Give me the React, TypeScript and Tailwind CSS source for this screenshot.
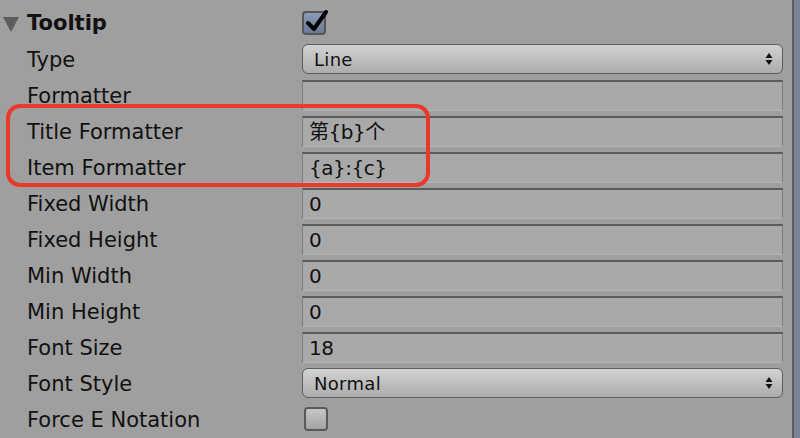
import React from 'react';

type Row =
  | { label: string; kind: 'text'; value: string }
  | { label: string; kind: 'popup'; value: string }
  | { label: string; kind: 'check'; checked: boolean };

const rows: Row[] = [
  { label: 'Type', kind: 'popup', value: 'Line' },
  { label: 'Formatter', kind: 'text', value: '' },
  { label: 'Title Formatter', kind: 'text', value: '第{b}个' },
  { label: 'Item Formatter', kind: 'text', value: '{a}:{c}' },
  { label: 'Fixed Width', kind: 'text', value: '0' },
  { label: 'Fixed Height', kind: 'text', value: '0' },
  { label: 'Min Width', kind: 'text', value: '0' },
  { label: 'Min Height', kind: 'text', value: '0' },
  { label: 'Font Size', kind: 'text', value: '18' },
  { label: 'Font Style', kind: 'popup', value: 'Normal' },
  { label: 'Force E Notation', kind: 'check', checked: false },
];

const font = { fontFamily: '"DejaVu Sans", "Noto Sans CJK SC", sans-serif' };

function TextField({ value }: { value: string }) {
  return (
    <div className="h-[31px] w-[481px] border-t-2 border-x border-b border-t-[#5c5c5c] border-x-[#7c7c7c] border-b-[#b4b4b4] bg-[#a9a9a9] pl-[6px] flex items-center text-[20px] tracking-[-0.5px] text-[#111]">
      {value}
    </div>
  );
}

function Popup({ value }: { value: string }) {
  return (
    <div className="h-[30px] w-[481px] rounded-[6px] border border-[#5e5e5e] bg-gradient-to-b from-[#d2d2d2] to-[#acacac] pl-[11px] pr-[9px] flex items-center justify-between text-[18px] tracking-[0.3px] text-[#111]">
      <span>{value}</span>
      <svg width="8" height="12" viewBox="0 0 8 12">
        <path d="M4 0 L7.5 5 L0.5 5 Z M0.5 7 L7.5 7 L4 12 Z" fill="#111" />
      </svg>
    </div>
  );
}

function Check({ checked }: { checked: boolean }) {
  return (
    <div
      className={
        checked
          ? 'relative h-[24px] w-[24px] rounded-[4px] border-2 border-[#565656] bg-gradient-to-b from-[#8a9ab4] to-[#6c7b94]'
          : 'h-[24px] w-[24px] rounded-[4px] border-2 border-[#5a5a5a] bg-gradient-to-b from-[#c6c6c6] to-[#a4a4a4] ml-[2px]'
      }
    >
      {checked && (
        <svg className="absolute left-[1px] top-[-4px]" width="26" height="26" viewBox="0 0 26 26">
          <path d="M3 14 L9 20 L21 3" stroke="#000" strokeWidth="4" fill="none" strokeLinecap="round" strokeLinejoin="round" />
        </svg>
      )}
    </div>
  );
}

export default function App() {
  return (
    <div className="relative flex h-[438px] w-[800px] overflow-hidden bg-[#9f9f9f]" style={font}>
      <div className="flex-1 pt-[5px]">
        <div className="flex h-[36px] items-center">
          <div className="flex w-[302px] items-center pt-[2px]">
            <svg className="ml-[3px] mr-[8px]" width="16" height="15" viewBox="0 0 16 15">
              <path d="M0 0 L16 0 L8 15 Z" fill="#5c5c5c" />
            </svg>
            <span className="text-[21px] font-bold text-[#111]">Tooltip</span>
          </div>
          <Check checked />
        </div>
        {rows.map((r) => (
          <div key={r.label} className="flex h-[36px] items-center">
            <div className="w-[302px] pl-[27px] pt-[3px] text-[21px] text-[#111]">{r.label}</div>
            {r.kind === 'text' && <TextField value={r.value} />}
            {r.kind === 'popup' && <Popup value={r.value} />}
            {r.kind === 'check' && <Check checked={r.checked} />}
          </div>
        ))}
      </div>
      <div className="w-[2px] bg-[#5b5b5b] ml-[9px]" />
      <div className="w-[6px] bg-[#7b8497]" />
      <div className="pointer-events-none absolute left-[6px] top-[104px] h-[83px] w-[424px] rounded-[14px] border-4 border-[#e8392b]" />
    </div>
  );
}
